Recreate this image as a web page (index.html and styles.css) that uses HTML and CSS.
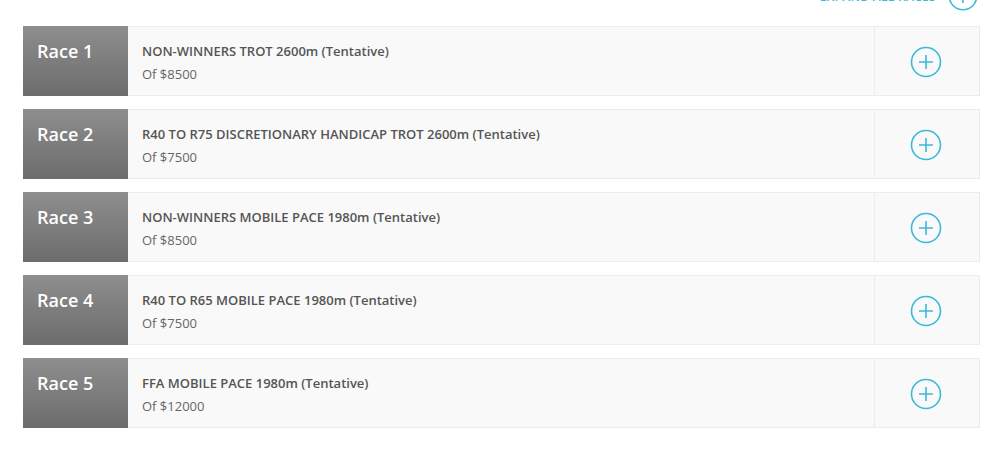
FILE: index.html
```html
<!DOCTYPE html>
<html>
<head>
<meta charset="utf-8">
<link rel="stylesheet" href="styles.css">
</head>
<body>
<div class="page">
  <div class="expand">
    <span class="expand-text">EXPAND ALL RACES</span>
    <svg class="expand-icon" width="30" height="30" viewBox="0 0 30 30"><circle cx="15" cy="15" r="13.8" fill="none" stroke="#3bb9d9" stroke-width="1.6"/><path d="M15 8v14M8 15h14" stroke="#3bb9d9" stroke-width="1.6"/></svg>
  </div>
  <div class="races">
    <div class="race">
      <div class="label">Race 1</div>
      <div class="info"><div class="title">NON-WINNERS TROT 2600m (Tentative)</div><div class="prize">Of $8500</div></div>
      <div class="toggle"><svg width="32" height="32" viewBox="0 0 32 32"><circle cx="16" cy="16" r="14.5" fill="none" stroke="#3bb9d9" stroke-width="1.6"/><path d="M16 9v14M9 16h14" stroke="#3bb9d9" stroke-width="1.6"/></svg></div>
    </div>
    <div class="race">
      <div class="label">Race 2</div>
      <div class="info"><div class="title">R40 TO R75 DISCRETIONARY HANDICAP TROT 2600m (Tentative)</div><div class="prize">Of $7500</div></div>
      <div class="toggle"><svg width="32" height="32" viewBox="0 0 32 32"><circle cx="16" cy="16" r="14.5" fill="none" stroke="#3bb9d9" stroke-width="1.6"/><path d="M16 9v14M9 16h14" stroke="#3bb9d9" stroke-width="1.6"/></svg></div>
    </div>
    <div class="race">
      <div class="label">Race 3</div>
      <div class="info"><div class="title">NON-WINNERS MOBILE PACE 1980m (Tentative)</div><div class="prize">Of $8500</div></div>
      <div class="toggle"><svg width="32" height="32" viewBox="0 0 32 32"><circle cx="16" cy="16" r="14.5" fill="none" stroke="#3bb9d9" stroke-width="1.6"/><path d="M16 9v14M9 16h14" stroke="#3bb9d9" stroke-width="1.6"/></svg></div>
    </div>
    <div class="race">
      <div class="label">Race 4</div>
      <div class="info"><div class="title">R40 TO R65 MOBILE PACE 1980m (Tentative)</div><div class="prize">Of $7500</div></div>
      <div class="toggle"><svg width="32" height="32" viewBox="0 0 32 32"><circle cx="16" cy="16" r="14.5" fill="none" stroke="#3bb9d9" stroke-width="1.6"/><path d="M16 9v14M9 16h14" stroke="#3bb9d9" stroke-width="1.6"/></svg></div>
    </div>
    <div class="race">
      <div class="label">Race 5</div>
      <div class="info"><div class="title">FFA MOBILE PACE 1980m (Tentative)</div><div class="prize">Of $12000</div></div>
      <div class="toggle"><svg width="32" height="32" viewBox="0 0 32 32"><circle cx="16" cy="16" r="14.5" fill="none" stroke="#3bb9d9" stroke-width="1.6"/><path d="M16 9v14M9 16h14" stroke="#3bb9d9" stroke-width="1.6"/></svg></div>
    </div>
  </div>
</div>
</body>
</html>
```
FILE: styles.css
```css
html, body {
  margin: 0;
  padding: 0;
  background: #fff;
  font-family: "Open Sans", "Liberation Sans", sans-serif;
}
.page {
  width: 957px;
  margin-left: 23px;
}
.expand {
  display: flex;
  justify-content: flex-end;
  align-items: center;
  gap: 12px;
  height: 30px;
  margin-top: -19px;
  margin-right: 2px;
}
.expand-text {
  color: #3bb9d9;
  font-size: 12px;
  font-weight: 600;
  letter-spacing: 0.3px;
  line-height: 17px;
  padding-top: 1px;
}
.expand-icon {
  display: block;
}
.races {
  display: flex;
  flex-direction: column;
  gap: 13px;
  margin-top: 15px;
}
.race {
  display: flex;
  height: 70px;
  box-sizing: border-box;
  border: 1px solid #ececec;
  border-left: none;
  background: #f9f9f9;
}
.label {
  width: 105px;
  margin-top: -1px;
  margin-bottom: -1px;
  box-sizing: border-box;
  padding: 13px 0 0 14px;
  background: linear-gradient(to bottom, #8e8e8e, #6c6c6c);
  color: #fff;
  font-size: 18px;
  font-weight: 600;
}
.info {
  flex: 1;
  padding: 14px 0 0 14px;
}
.title {
  color: #555;
  font-size: 13px;
  font-weight: 600;
  line-height: 20px;
}
.prize {
  color: #666;
  font-size: 13px;
  line-height: 20px;
  margin-top: 3px;
}
.toggle {
  width: 105px;
  box-sizing: border-box;
  padding: 2px 2px 0 0;
  border-left: 1px solid #ececec;
  display: flex;
  align-items: center;
  justify-content: center;
}
.toggle svg {
  display: block;
}
```
